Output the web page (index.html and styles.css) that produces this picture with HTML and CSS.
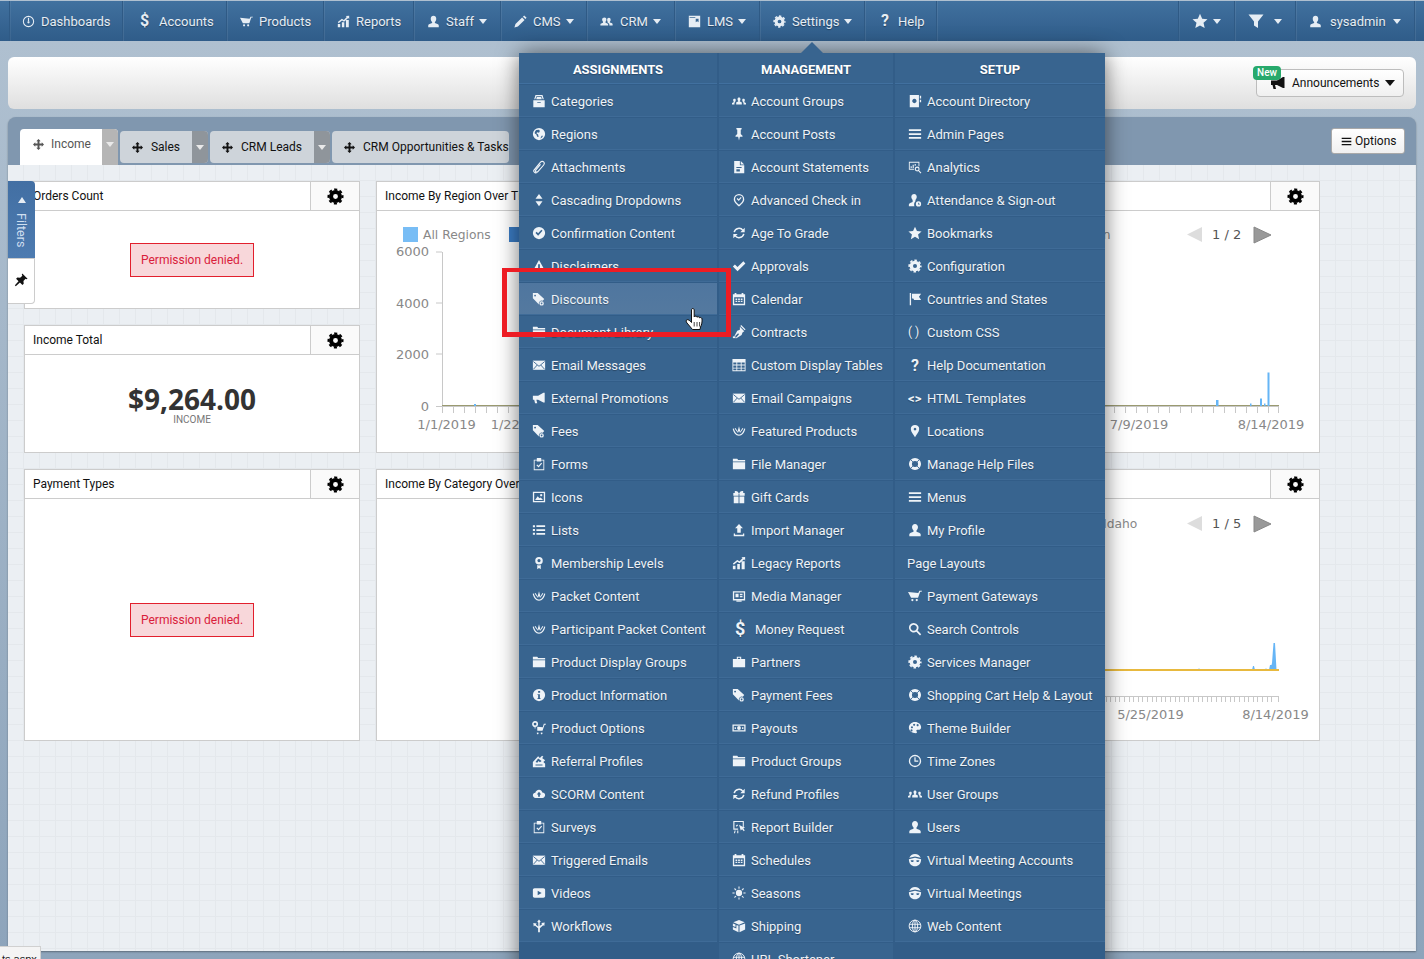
FILE: index.html
```html
<!DOCTYPE html>
<html lang="en">
<head>
<meta charset="utf-8">
<title>Dashboards</title>
<link rel="stylesheet" href="styles.css">
</head>
<body>
<svg class="sprite" xmlns="http://www.w3.org/2000/svg">
<symbol id="gauge" viewBox="0 0 16 16"><circle cx="8" cy="8" r="6.300" fill="none" stroke="currentColor" stroke-width="1.300"/><path d="M7.300 3.500h1.400V8H7.300z"/><circle cx="8" cy="9" r="1.400"/></symbol>
<symbol id="cart" viewBox="0 0 16 16"><path d="M0 3.500l11.800 1.200L13 2h3l-.5 1.200h-1.600L11.500 10H3.500z"/><circle cx="5" cy="12.700" r="1.300"/><circle cx="10" cy="12.700" r="1.300"/></symbol>
<symbol id="chart" viewBox="0 0 16 16"><path d="M1 11h3v4H1zM6 9h3v6H6zM11 6h3.500v9H11zM1 8.500L6 4.500l2.500 1.500L12 2.500 10.800 1.300 15 1v4l-1.200-1.200L8.700 8.200 6.200 6.700 2 10z"/></symbol>
<symbol id="user" viewBox="0 0 16 16"><path d="M8 1c2 0 3.400 1.500 3.400 3.600 0 1.700-.8 3.200-1.700 4v1.300c1.900.8 4.800 1.400 4.800 3V15h-13v-2.100c0-1.600 2.900-2.200 4.800-3V8.600c-.9-.8-1.700-2.300-1.700-4C4.600 2.500 6 1 8 1z"/></symbol>
<symbol id="pencil" viewBox="0 0 16 16"><path d="M12.500 .5l3 3-1.500 1.500-3-3zM10 3l3 3-8.200 8.200L.5 15.500l1.300-4.300z"/></symbol>
<symbol id="users" viewBox="0 0 16 16"><path d="M5.500 3c1.500 0 2.400 1.100 2.400 2.600 0 1.200-.5 2.200-1.100 2.800v1c1.300.5 3.200 1 3.200 2.100V13H.5v-1.500c0-1.100 1.900-1.600 3.200-2.100v-1C3.100 7.800 2.600 6.800 2.600 5.600 2.600 4.100 3.900 3 5.500 3zM11 3.500c1.300 0 2.100 1 2.100 2.300 0 1-.4 1.900-1 2.400v.9c1.200.4 3.400.9 3.400 1.900V13h-4v-1.600c0-.9-1-1.500-2.100-2V8.300c-.4-.6-.6-1.500-.6-2.500C8.800 4.500 9.700 3.500 11 3.500z"/></symbol>
<symbol id="group" viewBox="0 0 16 16"><path d="M8 4c1 0 1.700.8 1.700 1.900 0 .9-.4 1.600-.8 2v.8c1 .4 2.300.7 2.300 1.500V12H4.800v-1.800c0-.8 1.300-1.100 2.300-1.500v-.8c-.4-.4-.8-1.100-.8-2C6.300 4.800 7 4 8 4zM3 5.500c.8 0 1.300.6 1.300 1.400 0 .6-.2 1-.5 1.400v.5c-.7.4-1 1-1 1.700V12H0v-1.500c0-.6 1-.9 1.800-1.200v-.9c-.3-.4-.5-.9-.5-1.500 0-.8.700-1.400 1.700-1.400zM13 5.500c1 0 1.700.6 1.700 1.400 0 .6-.2 1.100-.5 1.500v.9c.8.3 1.800.6 1.800 1.200V12h-2.800v-1.500c0-.7-.3-1.300-1-1.700v-.5c-.3-.4-.5-.8-.5-1.400 0-.8.500-1.400 1.300-1.400z"/></symbol>
<symbol id="book" viewBox="0 0 16 16"><path fill-rule="evenodd" d="M1 1h14v14H1zM2 2.500v1h7v-1zM9.500 4.500V9l1.800-1.300L13 9V4.500z"/></symbol>
<symbol id="gear" viewBox="0 0 16 16"><circle cx="8" cy="8" r="6.600" fill="none" stroke="currentColor" stroke-width="1.900" stroke-dasharray="2.900 2.280" stroke-dashoffset="1.450"/><circle cx="8" cy="8" r="4.200" fill="none" stroke="currentColor" stroke-width="3.800"/></symbol>
<symbol id="star" viewBox="0 0 16 16"><path d="M8 .8l2.200 4.900 5.300.6-4 3.500 1.200 5.300L8 12.400l-4.700 2.700 1.200-5.300-4-3.500 5.300-.6z"/></symbol>
<symbol id="filter" viewBox="0 0 16 16"><path d="M.5 1.500h15L10 8.500V15l-4-2.500v-4z"/></symbol>
<symbol id="bars" viewBox="0 0 16 16"><path d="M1 2.500h14v2H1zM1 7h14v2H1zM1 11.500h14v2H1z"/></symbol>
<symbol id="archive" viewBox="0 0 16 16"><path d="M4 1h8l1.500 5h-1.300L11 2.500H5L3.800 6H2.500zM5.500 3.500h5l.7 2.500H4.800zM1.500 7h13v8h-13zM6 9v1h4V9z"/></symbol>
<symbol id="globe" viewBox="0 0 16 16"><path fill-rule="evenodd" d="M8 1a7 7 0 1 1 0 14A7 7 0 0 1 8 1zM5 3.500c-1 .8-1.800 2-2 3.500l2 1.500 1 2.500 1.500.5-.5-3-2-1.500 1-1 2 .5 1-2-1-1.500zM11 10l-1.500 3c1.500-.5 2.500-1.500 3-3z"/></symbol>
<symbol id="clip" viewBox="0 0 16 16"><path fill="none" stroke="currentColor" stroke-width="1.300" d="M5 14.500c-1.500 1-3.800-1.400-2.700-3L9.500 2.700c1-1.300 2.800-1.500 3.800-.5s.8 2.600-.2 3.800L7 13c-.8 1-2 1-2.600.4s-.4-1.600.3-2.500l5-6"/></symbol>
<symbol id="updown" viewBox="0 0 16 16"><path d="M8 1l4 5.500H4zM8 15L4 9.500h8z"/></symbol>
<symbol id="okcircle" viewBox="0 0 16 16"><path fill-rule="evenodd" d="M8 1a7 7 0 1 1 0 14A7 7 0 0 1 8 1zM4 8l3 3 5-5.500-1.300-1.200L7 8.300 5.300 6.700z"/></symbol>
<symbol id="warn" viewBox="0 0 16 16"><path fill-rule="evenodd" d="M8 1l7.500 13.500H.5zM7 6v4.500h2V6zM7 11.500v1.500h2v-1.500z"/></symbol>
<symbol id="tag" viewBox="0 0 16 16"><path fill-rule="evenodd" d="M1 1h5.500l7.500 7-1.700 1.900a3.500 3.500 0 0 0-4.400 4.400L1 7zM3.500 3a1 1 0 1 0 .01 0zM11 10.500a2.500 2.500 0 1 1 0 5 2.500 2.500 0 0 1 0-5zM11 12a1 1 0 1 0 .01 0z"/></symbol>
<symbol id="folder" viewBox="0 0 16 16"><path d="M1 2h5l1 1.500h8V5H1zM1 6h14v8H1z"/></symbol>
<symbol id="env" viewBox="0 0 16 16"><path d="M1 3h14v10.500H1z"/><path d="M1.500 4L8 9.500 14.500 4M1.500 13L6 8M14.500 13L10 8" fill="none" stroke="#38648f" stroke-width="1"/></symbol>
<symbol id="horn" viewBox="0 0 16 16"><path d="M13 2h1.500v11H13L7 10H5l1 4H3.500l-1-4H1V5.500h6z"/></symbol>
<symbol id="clipboard" viewBox="0 0 16 16"><path fill-rule="evenodd" d="M5.500 1h5v2H14v12H2V3h3.500zM3 4v10h10V4h-2.500v1h-5V4zM5 9.500L6 8.500l1.500 1.500L10.500 6.500l1 1L7.500 12z"/></symbol>
<symbol id="picture" viewBox="0 0 16 16"><path fill-rule="evenodd" d="M1 2h14v12H1zM2.500 3.500v9h11v-9zM3.500 11.500L6.500 7l2 2.500 1.500-1 2.500 3zM10.500 4.500a1.300 1.300 0 1 0 .01 0z"/></symbol>
<symbol id="list" viewBox="0 0 16 16"><path d="M1 2.500h2.400v2.400H1zM5 2.700h10v2H5zM1 6.800h2.400v2.400H1zM5 7h10v2H5zM1 11.100h2.400v2.400H1zM5 11.300h10v2H5z"/></symbol>
<symbol id="ribbon" viewBox="0 0 16 16"><path fill-rule="evenodd" d="M8 1a4.300 4.300 0 1 1 0 8.600A4.300 4.300 0 0 1 8 1zM8 3.500a1.800 1.800 0 1 0 .01 0zM6 10.300l2 .5 2-.5V15l-2-1.300L6 15z"/></symbol>
<symbol id="basket" viewBox="0 0 16 16"><path d="M.8 5.500c1 4.500 3.500 8 7.200 8s6.200-3.500 7.200-8l-1.300-.4C13 8.900 11 12 8 12S3 8.900 2.100 5.100z"/><path d="M8 2.500l1.300 5L8 10 6.700 7.500zM4 4.500l3 4.500-.5 1L3 5.200zM12 4.500l-3 4.500.5 1L13 5.200z"/></symbol>
<symbol id="info" viewBox="0 0 16 16"><path fill-rule="evenodd" d="M8 1a7 7 0 1 1 0 14A7 7 0 0 1 8 1zM7 3.500v2h2.300v-2zM6.300 7v1H7v3.500H6.300v1h3.400v-1H9V7z"/></symbol>
<symbol id="cartgear" viewBox="0 0 16 16"><path d="M6 6.500l6.300.5L13.500 3H16l-.4 1.200h-1.200L12 11H6zM6.500 13a1 1 0 1 0 .01 0zM11 13a1 1 0 1 0 .01 0z"/><circle cx="3.500" cy="3.500" r="2.500" fill="none" stroke="currentColor" stroke-width="1.800"/><path d="M3 6.500h1v2H3z"/></symbol>
<symbol id="mount" viewBox="0 0 16 16"><path fill-rule="evenodd" d="M1 14V9l6-6.500 2 2 2.500-2.500 1.500 1-1.500 1.500L15 7l-2 2 2 2v4H1zM7 5L4 9l2 1 1.500-2L9 9.500 11 8zM4 12h8v1H4z"/></symbol>
<symbol id="cloud" viewBox="0 0 16 16"><path fill-rule="evenodd" d="M8 3c2 0 3.500 1.300 3.800 3.200 1.900 0 3.200 1.300 3.200 3S13.700 12.500 12 12.500H4C2.200 12.500 1 11.200 1 9.500S2.200 6.700 3.800 6.500C4.300 4.500 6 3 8 3zM8 5.500L5.500 8.500H7V11h2V8.500h1.500z"/></symbol>
<symbol id="video" viewBox="0 0 16 16"><path fill-rule="evenodd" d="M3 2.500h10c1.300 0 2 .8 2 2v7c0 1.200-.7 2-2 2H3c-1.300 0-2-.8-2-2v-7c0-1.200.7-2 2-2zM6.500 5.500v5L11 8z"/></symbol>
<symbol id="flow" viewBox="0 0 16 16"><path d="M8 .5l2 2.500-1.200 1v4l2.700-2-.8-1.300 3.800-.7-.5 4-1.200-1L9 10.700V15H7v-4.300L3.200 7.500l-1.200 1-.5-4 3.800.7-.8 1.300L7.200 8.500V4L6 3z"/></symbol>
<symbol id="pin" viewBox="0 0 16 16"><path d="M5 1h6v1.500l-1 .5v5l2 2v1H9l-1 4.500L7 11H4v-1l2-2V3l-1-.5z"/></symbol>
<symbol id="file" viewBox="0 0 16 16"><path fill-rule="evenodd" d="M2.500 1H9v5h5v9H2.500zM10 1l4 4h-4zM5 8v1.200h6V8zM5 10.500v2.500h4v-2.500z"/></symbol>
<symbol id="badge" viewBox="0 0 16 16"><path fill-rule="evenodd" d="M8 1a6 6 0 0 1 6 6c0 3.500-4 6.500-6 8.500C6 13.500 2 10.500 2 7a6 6 0 0 1 6-6zM8 2.500A4.500 4.500 0 0 0 3.500 7c0 2.500 3 5 4.500 6.500C9.500 12 12.500 9.500 12.500 7A4.500 4.500 0 0 0 8 2.500zM5.300 6.800l1-1 1.400 1.400 2.300-2.700 1 .9-3.300 3.800z"/></symbol>
<symbol id="refresh" viewBox="0 0 16 16"><g fill="none" stroke="currentColor" stroke-width="1.700"><path d="M2.500 7A5.600 5.600 0 0 1 12.500 5M13.500 9A5.600 5.600 0 0 1 3.500 11"/></g><path d="M14.500 2v5h-5zM1.500 14V9h5z"/></symbol>
<symbol id="check" viewBox="0 0 16 16"><path d="M1 8.500l2.300-2.300 3 3L13 2.500 15.300 5l-9 9z"/></symbol>
<symbol id="cal" viewBox="0 0 16 16"><path fill-rule="evenodd" d="M3 1h2v1.500h6V1h2v1.500h2V15H1V2.500h2zM2.500 6v7.500h11V6zM4 7.500h2v1.500H4zM7 7.500h2v1.500H7zM10 7.500h2v1.500h-2zM4 10h2v1.500H4zM7 10h2v1.500H7zM10 10h2v1.500h-2z"/></symbol>
<symbol id="pen" viewBox="0 0 16 16"><path d="M9 2l5 5-2 1.500-1 3-6 3.500-1 0L8 10.500 7 9.500 2.800 13.500l0-1L6 6.500 9 5.500zM10.500 0l5 5-1 1-5-5z"/><path d="M1 13h3v2H1z"/></symbol>
<symbol id="table" viewBox="0 0 16 16"><path fill-rule="evenodd" d="M.5 1h15v14H.5zM1.500 5v2.500h3.500V5zM6 5v2.500h4V5zM11 5v2.500h3.500V5zM1.500 8.500V11h3.500V8.500zM6 8.500V11h4V8.500zM11 8.500V11h3.500V8.500zM1.500 12v2h3.500v-2zM6 12v2h4v-2zM11 12v2h3.500v-2z"/></symbol>
<symbol id="gift" viewBox="0 0 16 16"><path d="M4.500 1c1.300 0 2.500 1 3 2.500h1C9 2 10.200 1 11.500 1c1 0 1.500.6 1.500 1.300 0 .6-.3 1-.8 1.200H14.500v3h-6V4h-1v2.500h-6v-3h2.300c-.5-.2-.8-.6-.8-1.200C3 1.600 3.500 1 4.500 1zM2 7.500h5.500V15H2zM8.500 7.500H14V15H8.500z"/></symbol>
<symbol id="upload" viewBox="0 0 16 16"><path d="M8 1l4.500 5H10v5H6V6H3.500zM2 12h1.500v1.300h9V12H14v3H2z"/></symbol>
<symbol id="media" viewBox="0 0 16 16"><path fill-rule="evenodd" d="M1 2.500h14V13H1zM2.500 4v7.500h11V4zM4 5.500h3.500v4H4zM9 5.500h3v1.500H9zM9 8h3v1.500H9z"/><path d="M5 13h6v1.500H5z"/></symbol>
<symbol id="brief" viewBox="0 0 16 16"><path fill-rule="evenodd" d="M5.500 2h5v2.500H15V14H1V4.500h4.500zM6.700 3.200v1.300h2.600V3.200z"/></symbol>
<symbol id="cash" viewBox="0 0 16 16"><path fill-rule="evenodd" d="M.5 4h15v8H.5zM2 5.500v5h12v-5zM8 5.800a2.200 2.200 0 1 1 0 4.400 2.200 2.200 0 0 1 0-4.400zM3 7h1.500v2H3zM11.500 7H13v2h-1.500z"/></symbol>
<symbol id="present" viewBox="0 0 16 16"><path fill-rule="evenodd" d="M1.500 1h12v7h-1.200V2.300H2.800v7.400H7V11H1.500zM8 5.500l3.500 2 3.500 1-2 1 1.500 2.500-1 .8-2-2.300L10 12zM3 12h1.200l-.8 3H2.200zM6 12h1.200v3H6zM4.300 6.500L6 5l1 1-1.700 1.700z"/></symbol>
<symbol id="sun" viewBox="0 0 16 16"><circle cx="8" cy="8" r="3.600"/><path d="M7.400.5h1.200v2.500H7.400zM7.400 13h1.200v2.500H7.400zM.5 7.400H3v1.200H.5zM13 7.400h2.500v1.200H13zM2.400 3.300l.9-.9L5 4.200l-.8.8zM11 11.800l.8-.8 1.800 1.800-.9.9zM2.400 12.700L4.200 11l.8.8-1.800 1.800zM11 4.200l1.800-1.800.9.9L11.800 5z"/></symbol>
<symbol id="cube" viewBox="0 0 16 16"><path d="M8 1l6.500 2.800L8 6.500 1.500 3.800zM1 5l3 1.200v3L1 8zM7.400 7.500V15L1 12V9.200l4 1.600V7zM8.600 7.500l6.400-2.500v7l-6.400 3z"/></symbol>
<symbol id="www" viewBox="0 0 16 16"><g fill="none" stroke="currentColor" stroke-width="1.100"><circle cx="8" cy="8" r="6.700"/><ellipse cx="8" cy="8" rx="3" ry="6.700"/><path d="M8 1.300v13.400M1.500 6h13M1.500 10h13"/></g></symbol>
<symbol id="dir" viewBox="0 0 16 16"><path fill-rule="evenodd" d="M2 1h10.500v14H2zM7.300 5.500a2.500 2.500 0 1 0 .01 0zM13.500 2H15v3h-1.500zM13.500 6.500H15v3h-1.500z"/></symbol>
<symbol id="analytics" viewBox="0 0 16 16"><path fill-rule="evenodd" d="M1 2h12v5h-1V3H2v7h5v1H1zM3 7h1.300v2H3zM5.300 5.500h1.300V9H5.300zM7.600 4.500h1.300v2H7.600zM10.500 7.500a2.800 2.800 0 1 1 0 5.600 2.800 2.800 0 0 1 0-5.600zM10.500 8.800a1.500 1.500 0 1 0 .01 0zM12.800 12l2.500 2.500-.9.900-2.500-2.500z"/></symbol>
<symbol id="userclock" viewBox="0 0 16 16"><path fill-rule="evenodd" d="M7 1c1.700 0 3 1.400 3 3.400 0 1.500-.7 2.800-1.500 3.500v1.500C7.500 10.300 7 11.500 7 13c0 .7.100 1.400.4 2H1v-1.800c0-1.400 2.500-2.200 4.300-3V7.900C4.500 7.200 3.800 5.900 3.800 4.400 3.800 2.400 5.300 1 7 1zM12 9.500a3 3 0 1 1 0 6 3 3 0 0 1 0-6zM11.500 11v2h2v-.8h-1.200V11z"/></symbol>
<symbol id="flag" viewBox="0 0 16 16"><path d="M2 1h1.500v14H2zM4.500 2h10.500l-2.500 3.500L15 9H7L6 7.500H4.500z"/></symbol>
<symbol id="marker" viewBox="0 0 16 16"><path fill-rule="evenodd" d="M8 1a4.800 4.800 0 0 1 4.800 4.800C12.800 9 9.500 12.500 8 15 6.500 12.500 3.200 9 3.200 5.800A4.800 4.800 0 0 1 8 1zM8 4.300a1.500 1.500 0 1 0 .01 0z"/></symbol>
<symbol id="lifebuoy" viewBox="0 0 16 16"><circle cx="8" cy="8" r="5.200" fill="none" stroke="currentColor" stroke-width="3.400"/><path d="M2.800 2.800l2.800 2.800M13.200 2.800l-2.800 2.800M2.800 13.200l2.800-2.800M13.200 13.200l-2.800-2.800" fill="none" stroke="#38648f" stroke-width="1"/></symbol>
<symbol id="search" viewBox="0 0 16 16"><path fill-rule="evenodd" d="M6.500 1a5.500 5.500 0 0 1 4.400 8.800l4.200 4.200-1.400 1.400-4.200-4.200A5.500 5.500 0 1 1 6.500 1zM6.500 3a3.500 3.500 0 1 0 .01 0z"/></symbol>
<symbol id="palette" viewBox="0 0 16 16"><path fill-rule="evenodd" d="M8 1c4 0 7 2.800 7 6 0 2-1.500 3-3 3h-1.500c-1 0-1.300 1.300-.6 2 .7.800.2 2-.9 2C4.500 14 1 11.500 1 7.500 1 4 4 1 8 1zM4.500 6a1.200 1.200 0 1 0 .01 0zM7 3a1.200 1.200 0 1 0 .01 0zM11 3.500a1.200 1.200 0 1 0 .01 0zM4 9.500a1.200 1.200 0 1 0 .01 0z"/></symbol>
<symbol id="clock" viewBox="0 0 16 16"><circle cx="8" cy="8" r="6.300" fill="none" stroke="currentColor" stroke-width="1.500"/><path d="M7.300 3.800h1.400v3.700h3v1.400H7.300z"/></symbol>
<symbol id="mask" viewBox="0 0 16 16"><path fill-rule="evenodd" d="M8 1a7 7 0 0 1 6.500 4.500L8 4 1.500 5.500A7 7 0 0 1 8 1zM1 7l7-1.500L15 7c0 5-3 8-7 8s-7-3-7-8zM3 8.500c.5 1.700 2 2 3 1.500l.8-1.200c-1.200-.5-2.500-.7-3.800-.3zM13 8.500c-1.300-.4-2.600-.2-3.800.3L10 10c1 .5 2.500.2 3-1.500z"/></symbol>
<symbol id="pushpin" viewBox="0 0 16 16"><path d="M9.500 .5l6 6-1.300.6-1-.5-2.400 2.500.3 3.200-1.500 1.400-2.800-2.800L2 15l-1-1 4.200-4.600L2.400 6.600 3.800 5.100l3.200.3L9.600 3l-.7-1.100z"/></symbol>
<symbol id="move" viewBox="0 0 16 16"><path d="M8 0l3.200 3.300H9.400v3.300h3.300V4.800L16 8l-3.300 3.200V9.400H9.400v3.300h1.800L8 16l-3.200-3.300h1.800V9.400H3.300v1.800L0 8l3.300-3.200v1.800h3.300V3.300H4.800z"/></symbol>
</svg>

<header class="topnav">
  <nav class="nav-group nav-left">
    <a class="nav-item"><span class="slot"><svg class="i"><use href="#gauge"/></svg></span>Dashboards</a>
    <a class="nav-item"><span class="slot slot-wide"><b class="dollar">$</b></span>Accounts</a>
    <a class="nav-item"><span class="slot"><svg class="i"><use href="#cart"/></svg></span>Products</a>
    <a class="nav-item"><span class="slot"><svg class="i"><use href="#chart"/></svg></span>Reports</a>
    <a class="nav-item"><span class="slot"><svg class="i"><use href="#user"/></svg></span>Staff<i class="caret"></i></a>
    <a class="nav-item"><span class="slot"><svg class="i"><use href="#pencil"/></svg></span>CMS<i class="caret"></i></a>
    <a class="nav-item"><span class="slot slot-20"><svg class="i"><use href="#users"/></svg></span>CRM<i class="caret"></i></a>
    <a class="nav-item"><span class="slot"><svg class="i"><use href="#book"/></svg></span>LMS<i class="caret"></i></a>
    <a class="nav-item"><span class="slot"><svg class="i"><use href="#gear"/></svg></span>Settings<i class="caret"></i></a>
    <a class="nav-item"><span class="slot slot-20"><b class="qmark">?</b></span>Help</a>
  </nav>
  <nav class="nav-group nav-right">
    <a class="nav-item nav-star"><svg class="i i-16"><use href="#star"/></svg><i class="caret"></i></a>
    <a class="nav-item nav-filter"><svg class="i i-16"><use href="#filter"/></svg><i class="caret caret-far"></i></a>
    <a class="nav-item nav-user"><span class="slot slot-user"><svg class="i"><use href="#user"/></svg></span>sysadmin<i class="caret caret-far"></i></a>
  </nav>
</header>

<main class="page">
  <section class="announce-bar">
    <div class="announce-btn">
      <svg class="i i-horn"><use href="#horn"/></svg>
      <span>Announcements</span>
      <i class="caret caret-dark"></i>
      <em class="badge-new">New</em>
    </div>
  </section>

  <section class="board">
    <div class="tabbar">
      <div class="tab tab-active"><svg class="i i-move"><use href="#move"/></svg><span>Income</span><i class="tab-drop"><i class="caret"></i></i></div>
      <div class="tab"><svg class="i i-move"><use href="#move"/></svg><span>Sales</span><i class="tab-drop"><i class="caret"></i></i></div>
      <div class="tab"><svg class="i i-move"><use href="#move"/></svg><span>CRM Leads</span><i class="tab-drop"><i class="caret"></i></i></div>
      <div class="tab"><svg class="i i-move"><use href="#move"/></svg><span>CRM Opportunities &amp; Tasks</span></div>
      <button class="options-btn"><svg class="i i-bars"><use href="#bars"/></svg>Options</button>
    </div>

    <div class="canvas">
      <div class="widgets">
        <article class="widget w-orders">
          <header class="w-head"><h3>Orders Count</h3><span class="w-gear"><svg class="i"><use href="#gear"/></svg></span></header>
          <div class="w-body w-center"><p class="denied">Permission denied.</p></div>
        </article>

        <article class="widget w-region">
          <header class="w-head"><h3>Income By Region Over Time</h3><span class="w-gear"><svg class="i"><use href="#gear"/></svg></span></header>
          <svg class="chart chart-a" viewBox="0 0 944 242" width="944" height="242">
            <rect class="sw1" x="26" y="16" width="15" height="15"/>
            <text class="lbl" x="46" y="28">All Regions</text>
            <rect class="sw2" x="132" y="16" width="15" height="15"/>
            <text class="lbl lbl-end" x="733.500" y="28">Michigan</text>
            <g class="lbl-y"><text x="52" y="45">6000</text><text x="52" y="97">4000</text><text x="52" y="148">2000</text><text x="52" y="200">0</text></g>
            <path class="axis" d="M59 41h6M59 92h6M59 143h6M59 195.500h6M65.500 41v155M65 195.500H902"/>
            <path class="axis" d="M65.500 196v6M76.500 196v6M87.500 196v6M98.500 196v6M109.500 196v6M120.500 196v6M131.500 196v6M142.500 196v6M153.500 196v6M726.500 196v6M737.500 196v6M748.500 196v6M759.500 196v6M770.500 196v6M781.500 196v6M792.500 196v6M803.500 196v6M814.500 196v6M825.500 196v6M836.500 196v6M847.500 196v6M858.500 196v6M869.500 196v6M880.500 196v6M891.500 196v6M901.500 196v6"/>
            <path class="ln" d="M65 194.500H902"/>
            <path class="bar" d="M97 193h2v2h-2zM839 189h2.500v6H839zM873 192.500h1.500v2.500H873zM883 187.500h2v7.500h-2zM887 192.500h1.500v2.500H887zM890.500 161.500h2v33.500h-2z"/>
            <g class="lbl-x"><text x="69.500" y="218">1/1/2019</text><text x="147" y="218">1/22/2019</text><text x="762" y="218">7/9/2019</text><text x="894" y="218">8/14/2019</text></g>
            <path class="pg-off" d="M810 23.500l15-7.500v15z"/>
            <text class="pg" x="835" y="28">1 / 2</text>
            <path class="pg-on" d="M877 16l17 8-17 8z"/>
          </svg>
        </article>

        <article class="widget w-total">
          <header class="w-head"><h3>Income Total</h3><span class="w-gear"><svg class="i"><use href="#gear"/></svg></span></header>
          <div class="w-body w-center w-col w-total-body"><strong class="big">$9,264.00</strong><small class="big-sub">INCOME</small></div>
        </article>

        <article class="widget w-payment">
          <header class="w-head"><h3>Payment Types</h3><span class="w-gear"><svg class="i"><use href="#gear"/></svg></span></header>
          <div class="w-body w-center"><p class="denied">Permission denied.</p></div>
        </article>

        <article class="widget w-category">
          <header class="w-head"><h3>Income By Category Over Time</h3><span class="w-gear"><svg class="i"><use href="#gear"/></svg></span></header>
          <svg class="chart" viewBox="0 0 944 242" width="944" height="242">
            <text class="lbl" x="726" y="29">Idaho</text>
            <path class="pg-off" d="M810 24.500l15-7.500v15z"/>
            <text class="pg" x="835" y="29">1 / 5</text>
            <path class="pg-on" d="M877 17l17 8-17 8z"/>
            <path class="area" d="M728 171H821l1-2 1 2h52l1-4h1l1 4h10l1-2 1 2h2l1-5h1.500l.5-2 1.500-20h1.500l1.500 27z"/>
            <path class="ln2" d="M720 171h182"/>
            <path class="axis" d="M720 197.500h182M724.500 197v6M729.500 197v6M733.500 197v6M738.500 197v6M742.500 197v6M747.500 197v6M752.500 197v6M756.500 197v6M761.500 197v6M765.500 197v6M770.500 197v6M775.500 197v6M779.500 197v6M784.500 197v6M788.500 197v6M793.500 197v6M798.500 197v6M802.500 197v6M807.500 197v6M811.500 197v6M816.500 197v6M821.500 197v6M825.500 197v6M830.500 197v6M834.500 197v6M839.500 197v6M844.500 197v6M848.500 197v6M853.500 197v6M857.500 197v6M862.500 197v6M867.500 197v6M871.500 197v6M876.500 197v6M880.500 197v6M885.500 197v6M890.500 197v6M894.500 197v6M901.500 197v6"/>
            <g class="lbl-x"><text x="773.500" y="220">5/25/2019</text><text x="898.500" y="220">8/14/2019</text></g>
          </svg>
        </article>
      </div>
    </div>
  </section>
</main>

<aside class="filters">
  <div class="filters-top"><i class="caret caret-up"></i><span>Filters</span></div>
  <div class="filters-pin"><svg class="i"><use href="#pushpin"/></svg></div>
</aside>

<div class="dropdown">
  <i class="dropdown-arrow"></i>
  <div class="dd-col">
    <h4>ASSIGNMENTS</h4>
    <a class="mi"><svg class="i"><use href="#archive"/></svg>Categories</a>
    <a class="mi"><svg class="i"><use href="#globe"/></svg>Regions</a>
    <a class="mi"><svg class="i"><use href="#clip"/></svg>Attachments</a>
    <a class="mi"><svg class="i"><use href="#updown"/></svg>Cascading Dropdowns</a>
    <a class="mi"><svg class="i"><use href="#okcircle"/></svg>Confirmation Content</a>
    <a class="mi"><svg class="i"><use href="#warn"/></svg>Disclaimers</a>
    <a class="mi mi-hover"><svg class="i"><use href="#tag"/></svg>Discounts</a>
    <a class="mi"><svg class="i"><use href="#folder"/></svg>Document Library</a>
    <a class="mi"><svg class="i"><use href="#env"/></svg>Email Messages</a>
    <a class="mi"><svg class="i"><use href="#horn"/></svg>External Promotions</a>
    <a class="mi"><svg class="i"><use href="#tag"/></svg>Fees</a>
    <a class="mi"><svg class="i"><use href="#clipboard"/></svg>Forms</a>
    <a class="mi"><svg class="i"><use href="#picture"/></svg>Icons</a>
    <a class="mi"><svg class="i"><use href="#list"/></svg>Lists</a>
    <a class="mi"><svg class="i"><use href="#ribbon"/></svg>Membership Levels</a>
    <a class="mi"><svg class="i"><use href="#basket"/></svg>Packet Content</a>
    <a class="mi"><svg class="i"><use href="#basket"/></svg>Participant Packet Content</a>
    <a class="mi"><svg class="i"><use href="#folder"/></svg>Product Display Groups</a>
    <a class="mi"><svg class="i"><use href="#info"/></svg>Product Information</a>
    <a class="mi"><svg class="i"><use href="#cartgear"/></svg>Product Options</a>
    <a class="mi"><svg class="i"><use href="#mount"/></svg>Referral Profiles</a>
    <a class="mi"><svg class="i"><use href="#cloud"/></svg>SCORM Content</a>
    <a class="mi"><svg class="i"><use href="#clipboard"/></svg>Surveys</a>
    <a class="mi"><svg class="i"><use href="#env"/></svg>Triggered Emails</a>
    <a class="mi"><svg class="i"><use href="#video"/></svg>Videos</a>
    <a class="mi"><svg class="i"><use href="#flow"/></svg>Workflows</a>
  </div>
  <div class="dd-col">
    <h4>MANAGEMENT</h4>
    <a class="mi"><svg class="i"><use href="#group"/></svg>Account Groups</a>
    <a class="mi"><svg class="i"><use href="#pin"/></svg>Account Posts</a>
    <a class="mi"><svg class="i"><use href="#file"/></svg>Account Statements</a>
    <a class="mi"><svg class="i"><use href="#badge"/></svg>Advanced Check in</a>
    <a class="mi"><svg class="i"><use href="#refresh"/></svg>Age To Grade</a>
    <a class="mi"><svg class="i"><use href="#check"/></svg>Approvals</a>
    <a class="mi"><svg class="i"><use href="#cal"/></svg>Calendar</a>
    <a class="mi"><svg class="i"><use href="#pen"/></svg>Contracts</a>
    <a class="mi"><svg class="i"><use href="#table"/></svg>Custom Display Tables</a>
    <a class="mi"><svg class="i"><use href="#env"/></svg>Email Campaigns</a>
    <a class="mi"><svg class="i"><use href="#basket"/></svg>Featured Products</a>
    <a class="mi"><svg class="i"><use href="#folder"/></svg>File Manager</a>
    <a class="mi"><svg class="i"><use href="#gift"/></svg>Gift Cards</a>
    <a class="mi"><svg class="i"><use href="#upload"/></svg>Import Manager</a>
    <a class="mi"><svg class="i"><use href="#chart"/></svg>Legacy Reports</a>
    <a class="mi"><svg class="i"><use href="#media"/></svg>Media Manager</a>
    <a class="mi mi-money"><b class="dollar dollar-lg">$</b>Money Request</a>
    <a class="mi"><svg class="i"><use href="#brief"/></svg>Partners</a>
    <a class="mi"><svg class="i"><use href="#tag"/></svg>Payment Fees</a>
    <a class="mi"><svg class="i"><use href="#cash"/></svg>Payouts</a>
    <a class="mi"><svg class="i"><use href="#folder"/></svg>Product Groups</a>
    <a class="mi"><svg class="i"><use href="#refresh"/></svg>Refund Profiles</a>
    <a class="mi"><svg class="i"><use href="#present"/></svg>Report Builder</a>
    <a class="mi"><svg class="i"><use href="#cal"/></svg>Schedules</a>
    <a class="mi"><svg class="i"><use href="#sun"/></svg>Seasons</a>
    <a class="mi"><svg class="i"><use href="#cube"/></svg>Shipping</a>
    <a class="mi"><svg class="i"><use href="#www"/></svg>URL Shortener</a>
  </div>
  <div class="dd-col">
    <h4>SETUP</h4>
    <a class="mi"><svg class="i"><use href="#dir"/></svg>Account Directory</a>
    <a class="mi"><svg class="i"><use href="#bars"/></svg>Admin Pages</a>
    <a class="mi"><svg class="i"><use href="#analytics"/></svg>Analytics</a>
    <a class="mi"><svg class="i"><use href="#userclock"/></svg>Attendance &amp; Sign-out</a>
    <a class="mi"><svg class="i"><use href="#star"/></svg>Bookmarks</a>
    <a class="mi"><svg class="i"><use href="#gear"/></svg>Configuration</a>
    <a class="mi"><svg class="i"><use href="#flag"/></svg>Countries and States</a>
    <a class="mi"><b class="glyph-text">( )</b>Custom CSS</a>
    <a class="mi"><b class="glyph-text glyph-q">?</b>Help Documentation</a>
    <a class="mi"><b class="glyph-text glyph-code">&lt;&gt;</b>HTML Templates</a>
    <a class="mi"><svg class="i"><use href="#marker"/></svg>Locations</a>
    <a class="mi"><svg class="i"><use href="#lifebuoy"/></svg>Manage Help Files</a>
    <a class="mi"><svg class="i"><use href="#bars"/></svg>Menus</a>
    <a class="mi"><svg class="i"><use href="#user"/></svg>My Profile</a>
    <a class="mi mi-plain">Page Layouts</a>
    <a class="mi"><svg class="i"><use href="#cart"/></svg>Payment Gateways</a>
    <a class="mi"><svg class="i"><use href="#search"/></svg>Search Controls</a>
    <a class="mi"><svg class="i"><use href="#gear"/></svg>Services Manager</a>
    <a class="mi"><svg class="i"><use href="#lifebuoy"/></svg>Shopping Cart Help &amp; Layout</a>
    <a class="mi"><svg class="i"><use href="#palette"/></svg>Theme Builder</a>
    <a class="mi"><svg class="i"><use href="#clock"/></svg>Time Zones</a>
    <a class="mi"><svg class="i"><use href="#group"/></svg>User Groups</a>
    <a class="mi"><svg class="i"><use href="#user"/></svg>Users</a>
    <a class="mi"><svg class="i"><use href="#mask"/></svg>Virtual Meeting Accounts</a>
    <a class="mi"><svg class="i"><use href="#mask"/></svg>Virtual Meetings</a>
    <a class="mi"><svg class="i"><use href="#www"/></svg>Web Content</a>
  </div>
</div>

<div class="annot-rect"></div>
<svg class="hand" viewBox="0 0 18 23" width="18" height="23"><path d="M6.500 1.500c.3-1.300 2.500-1.300 2.700.2V9c.5-1.200 2.500-1.200 2.800.3.5-1 2.400-.8 2.500.5.600-.6 2.300-.3 2.500 1 .3 2.800-.2 6-1.500 8.200l-.5 2.500H7.500L2 15c-1.200-1.300-1.200-3 .2-3.300 1.200-.2 2.500.8 4.300 2.800z" fill="#fff" stroke="#111" stroke-width="1"/><path d="M9.200 14v4.500M12 14v4.500M14.600 14v4.500" stroke="#111" stroke-width=".8" fill="none"/></svg>
<div class="status-tip">ts.aspx</div>
</body>
</html>
```
FILE: styles.css
```css
* { box-sizing: border-box; }
html, body { margin: 0; height: 959px; overflow: hidden; }
body {
  position: relative;
  font-family: Roboto, "Liberation Sans", Arial, sans-serif;
  font-size: 13px;
  color: #222;
  background: linear-gradient(#afc0d0 40px, #8da4bb 100%);
  padding-top: 1px;
}
.sprite { display: none; }
.i { width: 14px; height: 14px; fill: currentColor; flex: none; display: block; }

/* top nav */
.topnav {
  display: flex;
  height: 40px;
  background: linear-gradient(#41719f, #2f5c89);
  color: #e6edf4;
  padding: 0 9px;
  justify-content: space-between;
  text-shadow: 0 1px 1px rgba(0,0,0,.35);
}
.nav-group { display: flex; border-left: 1px solid #2f5a85; box-shadow: inset 1px 0 rgba(255,255,255,.06); }
.nav-item {
  display: flex;
  align-items: center;
  flex: none;
  padding-left: 13px;
  border-right: 1px solid #2f5a85;
  box-shadow: 1px 0 rgba(255,255,255,.08);
}
.nav-left .nav-item:nth-child(1) { width: 113px; padding-left: 12px; }
.nav-left .nav-item:nth-child(2) { width: 104px; }
.nav-left .nav-item:nth-child(3) { width: 97px; }
.nav-left .nav-item:nth-child(4) { width: 90px; }
.nav-left .nav-item:nth-child(5) { width: 87px; }
.nav-left .nav-item:nth-child(6) { width: 86px; }
.nav-left .nav-item:nth-child(7) { width: 88px; }
.nav-left .nav-item:nth-child(8) { width: 85px; }
.nav-left .nav-item:nth-child(9) { width: 105px; }
.nav-left .nav-item:nth-child(10) { width: 72px; }
.slot { width: 19px; flex: none; display: flex; }
.slot .i { width: 13px; height: 13px; }
.slot-20 { width: 20px; }
.slot-wide { width: 23px; padding-left: 4px; }
.dollar { font-size: 16px; font-weight: 700; line-height: 1; }
.qmark { font-size: 16px; font-weight: 700; line-height: 1; padding-left: 3px; }
.caret {
  display: inline-block; width: 0; height: 0; margin-left: 5px;
  border-left: 4px solid transparent; border-right: 4px solid transparent;
  border-top: 5px solid #e6edf4;
}
.caret-far { margin-left: 8px; }
.caret-dark { border-top: 6px solid #111; border-left-width: 5px; border-right-width: 5px; margin-left: 6px; }
.caret-up { border-top: 0; border-bottom: 6px solid #e6edf4; margin: 0; }
.i-16 { width: 16px; height: 16px; }
.nav-star { width: 56px; }
.nav-filter { width: 61px; }
.nav-filter .caret-far { margin-left: 10px; }
.nav-user { width: 119px; }
.nav-user .caret-far { margin-left: 7px; }
.slot-user { width: 21px; }

/* page */
.page { padding: 16px 8px 8px; }
.announce-bar {
  height: 52px;
  border-radius: 6px;
  background: linear-gradient(#fff, #dfdfdf);
  display: flex;
  justify-content: flex-end;
  padding: 12px 12px 0 0;
  margin-bottom: 8px;
}
.announce-btn {
  position: relative;
  display: flex;
  align-items: center;
  width: 148px;
  height: 28px;
  padding-left: 13px;
  border: 1px solid #bdbdbd;
  border-radius: 4px;
  color: #111;
  font-size: 12px;
  background: linear-gradient(#fff, #f0f0f0);
}
.i-horn { width: 16px; height: 16px; color: #111; margin-right: 6px; }
.badge-new {
  position: absolute; left: -4px; top: -4px;
  width: 28px; height: 14px;
  border-radius: 4px;
  background: #27a96c;
  color: #fff;
  font: 500 10px/14px Roboto, sans-serif;
  text-align: center;
}
.board {
  height: 834px;
  border-radius: 8px 8px 0 0;
  background: #8097af;
  box-shadow: 0 1px 2px rgba(0,0,0,.35);
}
.tabbar {
  position: relative;
  height: 48px;
  padding: 12px 0 0 12px;
  display: flex;
  align-items: flex-start;
  gap: 2px;
  font-size: 12px;
}
.tab {
  height: 32px;
  margin-top: 2px;
  display: flex;
  align-items: center;
  background: #ced4da;
  border-radius: 4px;
  padding-left: 12px;
  color: #111;
  overflow: hidden;
  flex: none;
}
.tab .i-move { width: 11px; height: 11px; margin-right: 8px; }
.tab-drop {
  display: flex; align-items: center; justify-content: center;
  width: 16px; height: 100%;
  margin-left: 12px;
  background: #8f959b;
}
.tab-drop .caret { margin: 0; border-top-color: #e9e9e9; }
.tab-active { height: 36px; margin-top: 0; background: #fff; border-radius: 4px 4px 0 0; color: #555; padding-left: 13px; }
.tab-active span { position: relative; top: -3px; }
.tab-active .i-move { position: relative; top: -3px; margin-right: 7px; }
.tab-active .tab-drop { background: #b5b5b5; margin-left: 11px; }
.tab-active .tab-drop .caret { position: relative; top: -3px; }
.options-btn {
  position: absolute; right: 11px; top: 11px;
  width: 74px; height: 26px;
  display: flex; align-items: center; gap: 3px;
  padding: 0 0 0 9px;
  font: 12px Roboto, sans-serif;
  color: #111;
  background: linear-gradient(#fff, #f0f0f0);
  border: 1px solid #a9a9a9;
  border-radius: 3px;
}
.i-bars { width: 11px; height: 11px; }
.canvas {
  height: 786px;
  padding: 16px;
  background-color: #ebeff3;
  background-image:
    linear-gradient(90deg, transparent 15px, #e4e8ec 15px),
    linear-gradient(transparent 15px, #e4e8ec 15px);
  background-size: 16px 16px;
}
.widgets {
  display: grid;
  grid-template-columns: 336px 944px;
  grid-template-rows: 128px 128px 272px;
  gap: 16px;
}
.widget { background: #fff; border: 1px solid #ccc; overflow: hidden; }
.w-region { grid-column: 2; grid-row: 1 / span 2; }
.w-payment { grid-column: 1; grid-row: 3; }
.w-category { grid-column: 2; grid-row: 3; }
.w-head {
  height: 29px;
  display: flex;
  align-items: center;
  justify-content: space-between;
  border-bottom: 1px solid #ccc;
}
.w-head h3 { margin: 0 0 0 8px; font-size: 12px; font-weight: 400; color: #111; }
.w-gear {
  width: 49px; height: 28px;
  display: flex; align-items: center; justify-content: center;
  border-left: 1px solid #ccc;
  background: #fafafa;
  color: #000;
}
.w-gear .i { width: 17px; height: 17px; }
.w-center { display: flex; align-items: center; justify-content: center; }
.w-body { height: calc(100% - 29px); }
.w-col { flex-direction: column; }
.w-total-body { padding-top: 2px; }
.denied {
  margin: 0;
  width: 124px; height: 34px;
  background: #f8d7da;
  border: 1px solid #e21f2d;
  color: #d9203a;
  font-size: 12px;
  line-height: 32px;
  text-align: center;
}
.big { font: 700 28px/30px "Open Sans", sans-serif; color: #333; }
.big-sub { font-size: 10px; line-height: 11px; color: #777; }
.chart { display: block; }
.lbl, .lbl-x, .lbl-y, .pg { font: 13px "DejaVu Sans", Verdana, sans-serif; fill: #888; }
.lbl { font-size: 12.3px; }
.lbl-end { text-anchor: end; }
.lbl-y { text-anchor: end; }
.lbl-x { text-anchor: middle; }
.pg { fill: #555; }
.sw1 { fill: #78bdf5; }
.sw2 { fill: #3b7cc4; }
.axis { stroke: #c8c8c8; stroke-width: 1; fill: none; }
.ln { stroke: #9a9a70; stroke-width: 1; fill: none; }
.ln2 { stroke: #e8b93e; stroke-width: 2; fill: none; }
.bar { fill: #66b5f6; }
.area { fill: #66b5f6; }
.pg-off { fill: #ddd; }
.pg-on { fill: #999; stroke: #888; }

/* filters */
.filters { position: absolute; left: 8px; top: 181px; width: 27px; }
.filters-top {
  height: 77px;
  background: linear-gradient(#426fa3, #4d7bb0);
  border-radius: 0 4px 0 0;
  color: #cfdff0;
  display: flex; flex-direction: column; align-items: center;
  padding-top: 16px;
}
.filters-top span { writing-mode: vertical-rl; margin-top: 10px; font-size: 12.5px; }
.filters-pin {
  height: 46px;
  padding-bottom: 2px;
  background: #fff;
  border: 1px solid #ccc;
  border-left: 0;
  border-radius: 0 0 4px 0;
  display: flex; align-items: center; justify-content: center;
  color: #111;
}

/* dropdown */
.dropdown {
  position: absolute; left: 519px; top: 53px;
  width: 586px; height: 930px;
  display: grid;
  grid-template-columns: 198px 174px 210px;
  gap: 2px;
  background: #325d88;
  border-radius: 6px 6px 0 0;
  box-shadow: 0 0 22px rgba(0,0,0,.55);
  color: #fff;
  text-shadow: 0 1px 1px rgba(0,0,0,.3);
}
.dropdown-arrow {
  position: absolute; left: 282px; top: -11px;
  border-left: 11px solid transparent;
  border-right: 11px solid transparent;
  border-bottom: 11px solid #38648f;
}
.dd-col { display: flex; flex-direction: column; gap: 1px; }
.dd-col h4 {
  margin: 0; height: 31px;
  background: #38648f;
  font: 700 13px/33px Roboto, sans-serif;
  text-align: center;
  color: #fff;
  border-bottom: 1px solid #41709f;
  flex: none;
}
.mi {
  height: 32px;
  flex: none;
  display: flex;
  align-items: center;
  padding: 1px 0 0 13px;
  background: #38648f;
  border-bottom: 1px solid #3f6b97;
  color: #eef3f8;
}
.mi > .i { margin-right: 5px; }
.mi-hover { background: linear-gradient(#4f769f, #54799f); }
.mi-plain { padding-left: 12px; }
.dollar-lg { font-size: 18px; width: 23px; padding-left: 3px; }
.glyph-text { width: 19px; font-weight: 400; font-size: 12px; }
.glyph-q { font-size: 16px; font-weight: 700; padding-left: 3px; }
.glyph-code { font-size: 13px; font-weight: 700; }

/* overlays */
.annot-rect {
  position: absolute; left: 502px; top: 268px;
  width: 229px; height: 69px;
  border: 5px solid #ed1c24;
  border-top-width: 4px;
  pointer-events: none;
}
.hand { position: absolute; left: 685px; top: 308px; }
.status-tip {
  position: absolute; left: -11px; top: 946px;
  width: 52px; height: 20px;
  padding: 6px 0 0 12px;
  background: #f4f4f4;
  border: 1px solid #d0d0d0;
  font: 11px/13px "Liberation Sans", sans-serif;
  color: #222;
}
```
